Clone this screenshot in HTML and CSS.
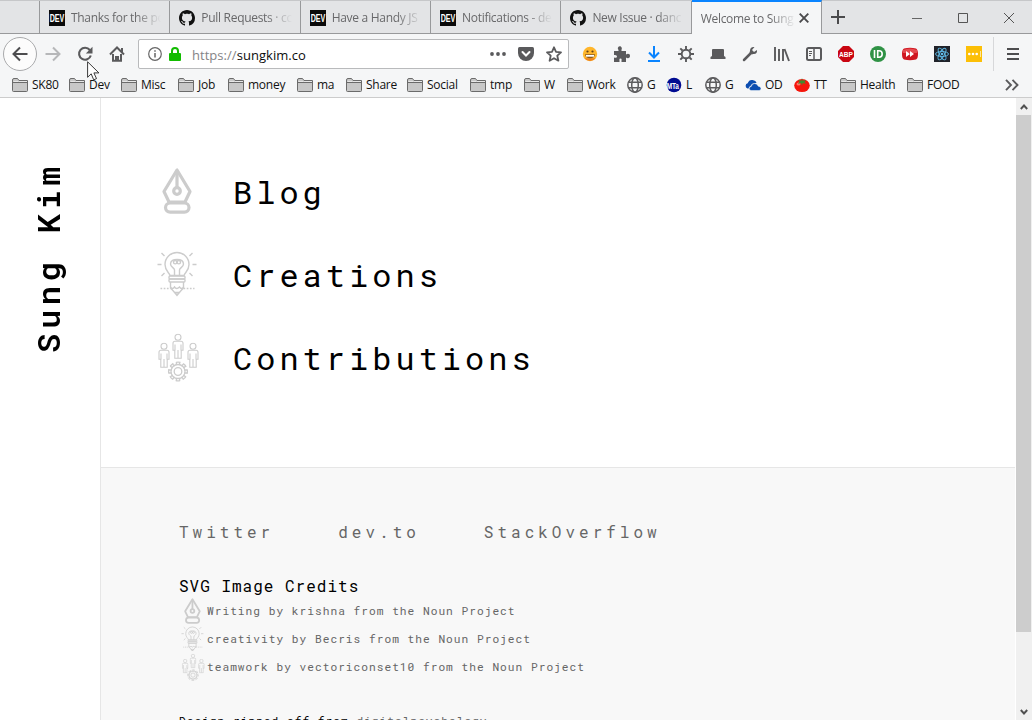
FILE: index.html
```html
<!DOCTYPE html>
<html lang="en">
<head>
<meta charset="utf-8">
<title>Welcome to Sung Kim</title>
<link rel="stylesheet" href="styles.css">
</head>
<body>
<svg class="defs" aria-hidden="true">
  <symbol id="github" viewBox="0 0 16 16"><path d="M8 0C3.58 0 0 3.58 0 8c0 3.54 2.29 6.53 5.47 7.59.4.07.55-.17.55-.38 0-.19-.01-.82-.01-1.49-2.01.37-2.53-.49-2.69-.94-.09-.23-.48-.94-.82-1.13-.28-.15-.68-.52-.01-.53.63-.01 1.08.58 1.23.82.72 1.21 1.87.87 2.33.66.07-.52.28-.87.51-1.07-1.78-.2-3.64-.89-3.64-3.95 0-.87.31-1.59.82-2.15-.08-.2-.36-1.02.08-2.12 0 0 .67-.21 2.2.82.64-.18 1.32-.27 2-.27s1.36.09 2 .27c1.53-1.04 2.2-.82 2.2-.82.44 1.1.16 1.92.08 2.12.51.56.82 1.27.82 2.15 0 3.07-1.87 3.75-3.65 3.95.29.25.54.73.54 1.48 0 1.07-.01 1.93-.01 2.2 0 .21.15.46.55.38A8 8 0 0 0 16 8c0-4.42-3.58-8-8-8z" fill="#111"/></symbol>
  <symbol id="folder" viewBox="0 0 16 14"><path d="M.5 12.500V2Q.5.5 2 .5h3.500L7 2.500h8.500v10q0 1-1 1h-13q-1 0-1-1z" fill="#c8c8c8" stroke="#6b6b6b"/><path d="M.5 4.500h15" stroke="#6b6b6b"/><path d="M1.500 3.500h5M7 3.500h8" stroke="#e8e8e8"/></symbol>
  <symbol id="globe" viewBox="0 0 16 16"><g fill="none" stroke="#5c5c5e" stroke-width="1.500"><circle cx="8" cy="8" r="7.200"/><ellipse cx="8" cy="8" rx="3.300" ry="7.200"/><path d="M1.500 5.300h13M1.500 10.700h13"/></g></symbol>
  <symbol id="pen" viewBox="0 0 42 50"><g fill="none" stroke="#ccc" stroke-width="3.200" stroke-linejoin="round"><path d="M20 4 7 25.500 12 36h16l5-10.500z"/><path d="M20 5v17"/><circle cx="20" cy="25" r="3.300"/><rect x="8.500" y="37" width="23.500" height="9.200" rx="4.600"/></g></symbol>
  <symbol id="bulb" viewBox="0 0 42 50"><g fill="none" stroke="#ccc" stroke-width="1.400" transform="translate(-.5)"><path d="M13.500 26.500c-1-3-5-5-5-11a12 12 0 0 1 24 0c0 6-4 8-5 11z"/><path d="M18 26v-5c0-2-4-3-4-6 0-4 3-4.500 6.500-4.500S27 11 27 15c0 3-4 4-4 6v5"/><circle cx="18.700" cy="13.200" r="1.700"/><circle cx="22.300" cy="13.200" r="1.700"/><rect x="12.500" y="27" width="16" height="3" rx="1"/><rect x="12.500" y="30" width="16" height="3" rx="1"/><path d="M14 33v6l6.500 7 6.500-7v-6M14 38q2 3 4 0 2 3 5 0 2 3 4 0M18 43.500h5l-2.500 3z"/><path d="M1 15.500h4M36 15.500h4M5 4l3 3M36 4l-3 3M5 27l3-3M36 27l-3-3"/><path d="M4 39.500h10M27 39.500h11" stroke-dasharray="1.700 1.500"/></g></symbol>
  <symbol id="person" viewBox="0 0 12 26"><g fill="none" stroke="#ccc" stroke-width="1.100"><circle cx="6" cy="3.700" r="3"/><path d="M3 7.800h6q2 0 2 2v7H9.200v8H2.800v-8H1v-7q0-2 2-2M3 11v6M9 11v6M6 16.500v8"/></g></symbol>
  <symbol id="team" viewBox="0 0 42 50"><use href="#person" x="15" y="1.500" width="12" height="26"/><use href="#person" x="1" y="10.500" width="12" height="26"/><use href="#person" x="30" y="10.500" width="12" height="26"/><g fill="none" stroke="#ccc" stroke-width="1.300" transform="translate(0 1)"><circle cx="21" cy="38.500" r="3.800"/><circle cx="21" cy="38.500" r="7"/><circle cx="21" cy="38.500" r="9.400" stroke-dasharray="4.400 2.983" stroke-dashoffset="2.200"/><path d="M19.400 45v3M22.600 45v3M19.400 29v3M22.600 29v3M11.500 37h3M11.500 40h3M27.500 37h3M27.500 40h3M13.300 33l2.200 2M15.500 31l2 2M26.500 31l-2 2M28.700 33l-2.200 2M13.300 44l2.200-2M15.500 46.200l2-2.200M26.500 46.200l-2-2.200M28.700 44l-2.200-2"/></g></symbol>
</svg>

<div class="browser">
  <div class="tabbar">
    <div class="tab blank"></div>
    <div class="tab"><svg class="i16" viewBox="0 0 16 16"><path d="M0 0h16v16H0z" fill="#0a0a0a"/><text class="dev" transform="translate(8 12) scale(.68 1)">DEV</text></svg><span class="title">Thanks for the po</span></div>
    <div class="tab"><svg class="i16"><use href="#github"/></svg><span class="title">Pull Requests · cc</span></div>
    <div class="tab"><svg class="i16" viewBox="0 0 16 16"><path d="M0 0h16v16H0z" fill="#0a0a0a"/><text class="dev" transform="translate(8 12) scale(.68 1)">DEV</text></svg><span class="title">Have a Handy JS</span></div>
    <div class="tab"><svg class="i16" viewBox="0 0 16 16"><path d="M0 0h16v16H0z" fill="#0a0a0a"/><text class="dev" transform="translate(8 12) scale(.68 1)">DEV</text></svg><span class="title">Notifications - de</span></div>
    <div class="tab"><svg class="i16"><use href="#github"/></svg><span class="title">New Issue · danc</span></div>
    <div class="tab active"><span class="title">Welcome to Sung</span><svg class="close" viewBox="0 0 10 10"><path d="m.7.7 8.600 8.600M9.300.7.7 9.300" stroke="#4a4a4c" stroke-width="1.900"/></svg></div>
    <svg class="plus" viewBox="0 0 14 14"><path d="M7 0v14M0 7h14" stroke="#4a4a4c" stroke-width="2"/></svg>
    <div class="window-buttons">
      <svg viewBox="0 0 12 12"><path d="M1 6.500h10" stroke="#666"/></svg>
      <svg viewBox="0 0 12 12"><path d="M1.500 1.500h9v9h-9z" fill="none" stroke="#555"/></svg>
      <svg viewBox="0 0 12 12"><path d="m1 1 10 10M11 1 1 11" stroke="#555"/></svg>
    </div>
  </div>

  <div class="toolbar">
    <div class="nav">
      <span class="back"><svg class="i16" viewBox="0 0 16 16"><path d="M15.500 8H1.500M8 1.500 1.500 8 8 14.500" fill="none" stroke="#4d4d4f" stroke-width="2"/></svg></span>
      <svg class="i16" viewBox="0 0 16 16"><path d="M.5 8h14M8 1.500 14.500 8 8 14.500" fill="none" stroke="#b6b7b9" stroke-width="2"/></svg>
      <svg class="i16" viewBox="0 0 16 16"><path d="M13.800 9.500A6 6 0 1 1 12.800 4" fill="none" stroke="#5a5a5c" stroke-width="2.100"/><path d="M15.500.8V7.500H8.800z" fill="#5a5a5c"/></svg>
      <svg class="i16" viewBox="0 0 16 16"><path d="m1 8.500 7-7 7 7" fill="none" stroke="#5a5a5c" stroke-width="2"/><path d="M12 2h2v4h-2z" fill="#5a5a5c"/><path d="M4 8v6.800h3V11h2v3.800h3V8" fill="none" stroke="#5a5a5c" stroke-width="2"/></svg>
    </div>
    <div class="urlbar">
      <svg class="info" viewBox="0 0 14 14"><circle cx="7" cy="7" r="6.300" fill="none" stroke="#666" stroke-width="1.200"/><path d="M7 6v4.500M7 3.200v1.500" stroke="#666" stroke-width="1.500"/></svg>
      <svg class="lock" viewBox="0 0 12 14"><path d="M3 7V4a3 3 0 0 1 6 0v3" fill="none" stroke="#12bc00" stroke-width="2"/><rect y="6" width="12" height="8" rx="1" fill="#12bc00"/></svg>
      <span class="url"><i>https://</i>sungkim.co</span>
      <span class="url-actions">
        <svg class="i16" viewBox="0 0 16 16"><g fill="#5a5a5c"><circle cx="2" cy="8" r="1.900"/><circle cx="8" cy="8" r="1.900"/><circle cx="14" cy="8" r="1.900"/></g></svg>
        <svg class="i16" viewBox="0 0 16 16"><path d="M1.500 1h13q1.500 0 1.500 1.500V7A8 8 0 0 1 0 7V2.500Q0 1 1.500 1z" fill="#5a5a5c"/><path d="m4.500 6 3.500 3.500L11.500 6" fill="none" stroke="#fff" stroke-width="2" stroke-linecap="round"/></svg>
        <svg class="i16" viewBox="0 0 16 16"><path d="m8 1.300 2 4.500 5 .5-3.700 3.400 1.100 5L8 12.200l-4.400 2.500 1.100-5L1 6.300l5-.5z" fill="none" stroke="#5a5a5c" stroke-width="1.800" stroke-linejoin="round"/></svg>
      </span>
    </div>
    <div class="extensions">
      <svg viewBox="0 0 16 16"><circle cx="8" cy="8" r="7.200" fill="#ffb62c"/><path d="M2.300 12.300a7.200 7.200 0 0 0 11.400 0" fill="#ee8420"/><circle cx="5.500" cy="5.500" r="1.100" fill="#644018"/><circle cx="10.500" cy="5.500" r="1.100" fill="#644018"/><path d="M3 8.300h10q-.5 4-5 4t-5-4z" fill="#8a5a20"/><path d="M4 9h8v1.700H4z" fill="#fff"/></svg>
      <svg viewBox="0 0 16 16"><path d="M0 5h4.500V3.700Q3.500 3 4 1.500 5-.3 6.500.3 8.500 1.500 7.500 3.700V5H12v3.500q2-1.500 3.500-.2 1 1.700 0 3.200-1.500 1.500-3.500 0V16H7.500v-1.500q.5-2-1-2t-1 2V16H0v-4.500q3 1 3-1T0 9z" fill="#5a5a5c"/></svg>
      <svg viewBox="0 0 16 16"><path d="M8 0v11M3 6.500l5 5 5-5M2 15h12" fill="none" stroke="#0a84ff" stroke-width="2"/></svg>
      <svg viewBox="0 0 16 16"><circle cx="8" cy="8" r="4.300" fill="none" stroke="#5a5a5c" stroke-width="1.900"/><path d="M8 0v3M8 13v3M0 8h3M13 8h3M2.300 2.300l2.200 2.200M11.500 11.500l2.200 2.200M2.300 13.700l2.200-2.200M11.500 4.500l2.200-2.200" stroke="#5a5a5c" stroke-width="1.900"/></svg>
      <svg viewBox="0 0 16 16"><path d="M2 10V4q0-1 1-1h10q1 0 1 1v6l1.500 1v2H.5v-2z" fill="#5a5a5c"/></svg>
      <svg viewBox="0 0 16 16"><path d="m2 14 7-7" stroke="#5a5a5c" stroke-width="2.500" stroke-linecap="round"/><path d="M12.500 1Q8 .5 8 5l-.5 1.500 2.500 2L11 8q4.500.5 4-4l-3 2-2-2z" fill="#5a5a5c"/></svg>
      <svg viewBox="0 0 16 16"><path d="M1 1v14M5 3v12M9 3v12M10.500 3 15 15" stroke="#5a5a5c" stroke-width="1.900"/></svg>
      <svg viewBox="0 0 16 16"><rect x="1" y="2" width="14" height="12" rx="1.500" fill="none" stroke="#5a5a5c" stroke-width="2"/><path d="M8 2v12" stroke="#5a5a5c" stroke-width="1.500"/><path d="M3 5.500h3M3 7.500h3M3 9.500h2" stroke="#5a5a5c"/></svg>
      <svg viewBox="0 0 16 16"><path d="M5 0h6l5 5v6l-5 5H5l-5-5V5z" fill="#c90612"/><text class="abp" transform="translate(8 11) scale(.82 1)">ABP</text></svg>
      <svg viewBox="0 0 16 16"><circle cx="8" cy="8" r="8" fill="#2f9245"/><path d="M4.500 4v8M7.700 4.800h1.300a3.200 3.200 0 0 1 0 6.400H7.700z" fill="none" stroke="#fff" stroke-width="1.600"/></svg>
      <svg viewBox="0 0 16 16"><path d="M2 2.500q6-1.500 12 0 2 1 2 5.500t-2 5.500q-6 1.500-12 0-2-1-2-5.500t2-5.500z" fill="#cf1720"/><path d="M1 4q7-3 14 0v3H1z" fill="#e54b50"/><path d="m4 5 4 3-4 3zM8 5l4 3-4 3z" fill="#fff"/></svg>
      <svg viewBox="0 0 16 16"><path d="M0 0h16v16H0z" fill="#20232a"/><g fill="none" stroke="#61bce8" stroke-width=".9"><ellipse cx="8" cy="8" rx="6.500" ry="2.500"/><ellipse cx="8" cy="8" rx="6.500" ry="2.500" transform="rotate(60 8 8)"/><ellipse cx="8" cy="8" rx="6.500" ry="2.500" transform="rotate(120 8 8)"/></g><circle cx="8" cy="8" r="1.300" fill="#61bce8"/></svg>
      <svg viewBox="0 0 16 16"><path d="M0 0h16v16H0z" fill="#fcbf06"/><g fill="#fff"><circle cx="3.300" cy="8" r="1.300"/><circle cx="7" cy="8" r="1.300"/><circle cx="10.700" cy="8" r="1.300"/><path d="M14 5h1v6h-1z" opacity=".6"/></g></svg>
    </div>
    <div class="menu"><svg viewBox="0 0 12 12"><path d="M0 1h12M0 6h12M0 11h12" stroke="#4d4d4f" stroke-width="2"/></svg></div>
    <svg class="cursor" viewBox="0 0 13 20"><path d="M.6.8v15.500l3.600-3.500 2.500 6 2.800-1.200-2.600-5.700h5z" fill="#fff" stroke="#222" stroke-width=".9"/></svg>
  </div>

  <div class="bookmarks">
    <span><svg class="folder"><use href="#folder"/></svg><b>SK80</b></span>
    <span><svg class="folder"><use href="#folder"/></svg><b>Dev</b></span>
    <span><svg class="folder"><use href="#folder"/></svg><b>Misc</b></span>
    <span><svg class="folder"><use href="#folder"/></svg><b>Job</b></span>
    <span><svg class="folder"><use href="#folder"/></svg><b>money</b></span>
    <span><svg class="folder"><use href="#folder"/></svg><b>ma</b></span>
    <span><svg class="folder"><use href="#folder"/></svg><b>Share</b></span>
    <span><svg class="folder"><use href="#folder"/></svg><b>Social</b></span>
    <span><svg class="folder"><use href="#folder"/></svg><b>tmp</b></span>
    <span><svg class="folder"><use href="#folder"/></svg><b>W</b></span>
    <span><svg class="folder"><use href="#folder"/></svg><b>Work</b></span>
    <span><svg class="i16"><use href="#globe"/></svg><b>G</b></span>
    <span><svg class="i16" viewBox="0 0 16 16"><circle cx="8" cy="8" r="7.300" fill="#000b91"/><text class="mta" transform="translate(6.800 11.500) scale(.72 1)">MTa</text></svg><b>L</b></span>
    <span><svg class="i16"><use href="#globe"/></svg><b>G</b></span>
    <span><svg class="i16" viewBox="0 0 16 16"><path d="M2.500 11.500a2.700 2.700 0 0 1 .2-5.200Q4 2.500 7.500 3t4 3Q7 5.500 5.500 9q-2 .5-1.800 2.500z" fill="#0b4db0"/><path d="M6 13.500q-2-.3-1.800-2.300.4-1.700 2-1.700.8-3 3.400-3t3.700 2.700q2.700.2 2.700 2.300 0 2-2 2z" fill="#0b4db0" stroke="#f5f6f7" stroke-width=".5"/></svg><b>OD</b></span>
    <span><svg class="i16" viewBox="0 0 16 16"><ellipse cx="8" cy="8.600" rx="7.800" ry="6.500" fill="#f5160c"/><ellipse cx="4.500" cy="7" rx="2" ry="1.500" fill="#ff7466"/><path d="m8 1 .7 2.700L12 3l-1.500 2 1.500 2-3.300-1L8 8.500 7 6 4 7l1.500-2.300L4 3l3.300.7z" fill="#3f8b2e"/></svg><b>TT</b></span>
    <span><svg class="folder"><use href="#folder"/></svg><b>Health</b></span>
    <span><svg class="folder"><use href="#folder"/></svg><b>FOOD</b></span>
    <svg class="more" viewBox="0 0 14 12"><path d="m1 .8 5 5.200-5 5.200M7.500.8l5 5.200-5 5.200" fill="none" stroke="#5a5a5c" stroke-width="1.900"/></svg>
  </div>
</div>

<div class="viewport">
  <aside><h1>Sung Kim</h1></aside>
  <div class="page">
    <main>
      <a class="link"><svg class="pic"><use href="#pen"/></svg><span>Blog</span></a>
      <a class="link"><svg class="pic"><use href="#bulb"/></svg><span>Creations</span></a>
      <a class="link"><svg class="pic"><use href="#team"/></svg><span>Contributions</span></a>
    </main>
    <footer>
      <nav><a>Twitter</a><a>dev.to</a><a>StackOverflow</a></nav>
      <h2>SVG Image Credits</h2>
      <ul>
        <li><svg class="thumb"><use href="#pen"/></svg><span>Writing by krishna from the Noun Project</span></li>
        <li><svg class="thumb"><use href="#bulb"/></svg><span>creativity by Becris from the Noun Project</span></li>
        <li><svg class="thumb"><use href="#team"/></svg><span>teamwork by vectoriconset10 from the Noun Project</span></li>
      </ul>
      <p>Design ripped off from <a>digitalpsychology</a></p>
    </footer>
  </div>
  <div class="scrollbar">
    <svg viewBox="0 0 8 6"><path d="M.8 5 4 1.500 7.200 5" fill="none" stroke="#505050" stroke-width="1.900"/></svg>
    <div class="thumb-bar"></div>
    <svg viewBox="0 0 8 6"><path d="M.8 1 4 4.500 7.200 1" fill="none" stroke="#505050" stroke-width="1.900"/></svg>
  </div>
</div>
</body>
</html>
```
FILE: styles.css
```css
* { box-sizing: border-box; }
body {
  margin: 0;
  width: 1032px;
  height: 720px;
  overflow: hidden;
  display: flex;
  flex-direction: column;
  background: #fff;
  font-family: "Open Sans", "Noto Sans", sans-serif;
}
svg { display: block; flex: none; }
.defs { position: absolute; width: 0; height: 0; }
.i16 { width: 16px; height: 16px; }

/* Browser chrome */
.browser { flex: none; height: 98px; background: #f5f6f7; border-bottom: 1px solid #ccc; }
.tabbar {
  display: flex;
  height: 34px;
  background: #e3e4e6;
  border-top: 1px solid #c6c7c9;
  box-shadow: inset 0 -1px #98999b;
}
.tab {
  display: flex;
  align-items: center;
  flex: none;
  width: 130.350px;
  padding: 0 8px 0 9px;
  gap: 6px;
  border-right: 1px solid #98999b;
  font-size: 12px;
  color: #68686a;
}
.tab.blank { width: 40px; }
.tab .title {
  flex: 1;
  min-width: 0;
  white-space: nowrap;
  letter-spacing: -0.300px;
  -webkit-mask-image: linear-gradient(to left, transparent, #000 26px);
  mask-image: linear-gradient(to left, transparent, #000 26px);
}
.tab.active {
  margin-top: -1px;
  background: #f5f6f7;
  border-top: 2px solid #0a84ff;
  padding-right: 12px;
  gap: 3px;
}
.close { width: 10px; height: 10px; }
.dev { fill: #fff; font: bold 10.500px "Liberation Sans", sans-serif; text-anchor: middle; }
.plus { width: 14px; height: 14px; margin: 9px 0 0 9px; }
.window-buttons { display: flex; gap: 34px; margin: 11px 17px 0 auto; }
.window-buttons svg { width: 12px; height: 12px; }

.toolbar { position: relative; display: flex; height: 40px; align-items: center; padding-left: 3px; }
.nav { display: flex; align-items: center; gap: 16px; width: 135px; }
.back {
  display: flex;
  align-items: center;
  justify-content: center;
  width: 34px;
  height: 34px;
  margin-right: -8px;
  border: 1px solid #a9aaac;
  border-radius: 50%;
  background: #fcfcfc;
}
.urlbar {
  display: flex;
  align-items: center;
  width: 431px;
  height: 30px;
  padding: 0 6px 0 9px;
  border: 1px solid #b9babc;
  border-radius: 2px;
  background: #fff;
}
.info { width: 14px; height: 14px; }
.lock { width: 12px; height: 14px; margin-left: 7px; }
.url { margin-left: 11px; padding-top: 2px; font-size: 13px; letter-spacing: 0.040px; color: #0c0c0d; }
.url i { font-style: normal; color: #848486; }
.url-actions { display: flex; gap: 12px; margin-left: auto; }
.extensions { display: flex; gap: 16px; margin-left: 13px; }
.extensions svg { width: 16px; height: 16px; }
.abp { fill: #fff; font: bold 8px "Liberation Sans", sans-serif; text-anchor: middle; }
.mta { fill: #fff; font: bold 9px "Liberation Sans", sans-serif; text-anchor: middle; }
.menu { height: 34px; margin-left: 11px; padding: 11px 0 0 13px; border-left: 1px solid #d7d8da; }
.menu svg { width: 12px; height: 12px; }
.cursor { position: absolute; left: 87px; top: 27px; width: 13px; height: 20px; z-index: 2; }

.bookmarks {
  display: grid;
  grid-template-columns: 57px 52px 57px 50px 69px 49px 61px 63px 54px 43px 60px 39px 39px 40px 49px 46px 67px 98px 14px;
  align-items: center;
  height: 22px;
  padding-left: 12px;
  font-size: 12px;
  letter-spacing: -0.250px;
  color: #111;
}
.bookmarks span { display: flex; align-items: center; gap: 4px; white-space: nowrap; }
.bookmarks b { font-weight: normal; padding-bottom: 2px; }
.folder { width: 16px; height: 14px; }
.more { width: 14px; height: 12px; }

/* Page */
.viewport { display: flex; flex: 1; min-height: 0; overflow: hidden; font-family: "Roboto Mono", "DejaVu Sans Mono", monospace; }
aside { flex: none; width: 101px; padding: 62px 0 0 27px; border-right: 1px solid #e6e6e6; }
h1 {
  margin: 0;
  height: 193px;
  writing-mode: vertical-rl;
  transform: rotate(180deg);
  font-size: 32px;
  line-height: 42px;
  font-weight: 600;
  letter-spacing: 4.700px;
  white-space: nowrap;
}
.page { display: flex; flex-direction: column; flex: 1; min-width: 0; }
main { flex: none; height: 370px; padding: 68px 0 0 56px; border-bottom: 1px solid #e6e6e6; }
.link {
  display: flex;
  align-items: center;
  height: 50px;
  margin-bottom: 33px;
  gap: 34px;
  font-size: 32px;
  line-height: 50px;
  letter-spacing: 4px;
  color: #000;
}
.link span { padding-top: 2px; }
.pic { width: 42px; height: 50px; }
footer { flex: 1; min-height: 0; padding: 52px 0 0 78px; background: #f8f8f8; overflow: hidden; }
nav { display: flex; gap: 64px; height: 24px; font-size: 16px; line-height: 24px; letter-spacing: 4px; color: #666; }
h2 { margin: 30px 0 0; font-size: 16px; line-height: 24px; font-weight: normal; letter-spacing: 1px; }
ul { margin: -1px 0 0; padding: 0; list-style: none; }
li { display: flex; align-items: center; height: 28px; font-size: 11.200px; letter-spacing: 1px; color: #666; }
li span { padding-bottom: 2px; }
.thumb { width: 28px; height: 28px; }
footer p { margin: 30px 0 0; font-size: 11.200px; line-height: 20px; letter-spacing: 1px; color: #000; }
footer p a { color: #666; }
.scrollbar {
  display: flex;
  flex-direction: column;
  align-items: center;
  width: 17px;
  padding: 6px 0 5px;
  background: #f0f0f0;
  border-left: 1px solid #fff;
}
.scrollbar svg { width: 8px; height: 6px; }
.thumb-bar { width: 15px; height: 517px; margin: 5px 1px auto 0; background: #cdcdcd; }
```
